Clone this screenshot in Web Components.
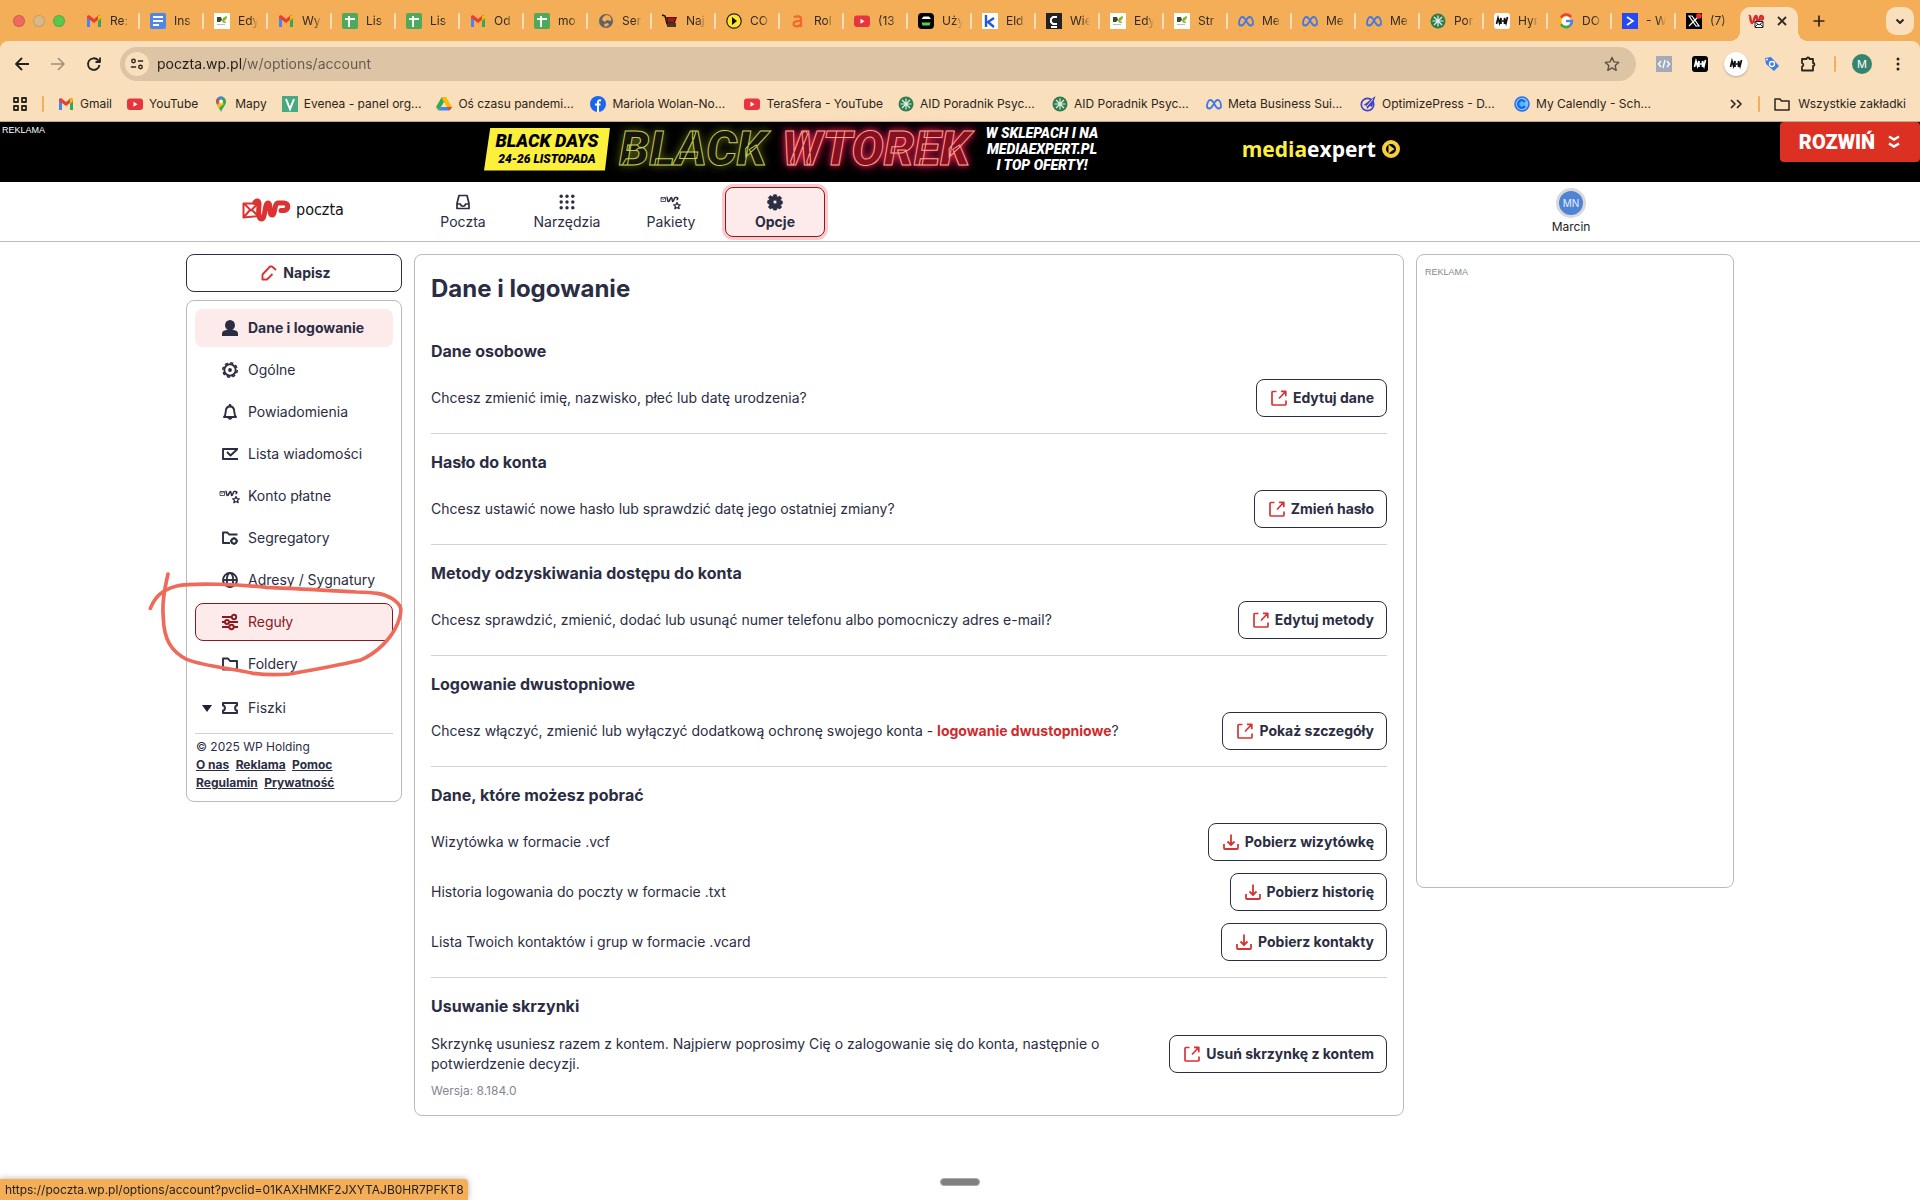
<!DOCTYPE html>
<html lang="pl">
<head>
<meta charset="utf-8">
<title>WP Poczta - Dane i logowanie</title>
<style>
  body {
    margin: 0;
    min-height: 100vh;
    display: flex;
    flex-direction: column;
    background: #fff;
    color: #2b2d42;
    font-family: Inter, "Liberation Sans", sans-serif;
    font-size: 14px;
    line-height: 20px;
  }
</style>
</head>
<body>
<browser-chrome></browser-chrome>
<ad-banner></ad-banner>
<mail-header>
  <nav-item icon="inbox">Poczta</nav-item>
  <nav-item icon="grid">Narzędzia</nav-item>
  <nav-item icon="wpstar">Pakiety</nav-item>
  <nav-item icon="gearfill" active>Opcje</nav-item>
</mail-header>
<mail-layout>
  <side-menu slot="side">
    <side-item icon="person" state="current">Dane i logowanie</side-item>
    <side-item icon="gear">Ogólne</side-item>
    <side-item icon="bell">Powiadomienia</side-item>
    <side-item icon="listcheck">Lista wiadomości</side-item>
    <side-item icon="wpstar">Konto płatne</side-item>
    <side-item icon="foldergear">Segregatory</side-item>
    <side-item icon="globe">Adresy / Sygnatury</side-item>
    <side-item icon="sliders" state="hover">Reguły</side-item>
    <side-item icon="folder">Foldery</side-item>
    <side-item icon="ticket" expandable>Fiszki</side-item>
  </side-menu>
  <options-panel heading="Dane i logowanie" version="Wersja: 8.184.0">
    <option-section heading="Dane osobowe">
      <option-row icon="open" action="Edytuj dane">Chcesz zmienić imię, nazwisko, płeć lub datę urodzenia?</option-row>
    </option-section>
    <option-section heading="Hasło do konta">
      <option-row icon="open" action="Zmień hasło">Chcesz ustawić nowe hasło lub sprawdzić datę jego ostatniej zmiany?</option-row>
    </option-section>
    <option-section heading="Metody odzyskiwania dostępu do konta">
      <option-row icon="open" action="Edytuj metody">Chcesz sprawdzić, zmienić, dodać lub usunąć numer telefonu albo pomocniczy adres e-mail?</option-row>
    </option-section>
    <option-section heading="Logowanie dwustopniowe">
      <option-row icon="open" action="Pokaż szczegóły">Chcesz włączyć, zmienić lub wyłączyć dodatkową ochronę swojego konta - <a href="#2fa">logowanie dwustopniowe</a>?</option-row>
    </option-section>
    <option-section heading="Dane, które możesz pobrać">
      <option-row icon="download" action="Pobierz wizytówkę">Wizytówka w formacie .vcf</option-row>
      <option-row icon="download" action="Pobierz historię">Historia logowania do poczty w formacie .txt</option-row>
      <option-row icon="download" action="Pobierz kontakty">Lista Twoich kontaktów i grup w formacie .vcard</option-row>
    </option-section>
    <option-section heading="Usuwanie skrzynki" last>
      <option-row icon="open" action="Usuń skrzynkę z kontem">Skrzynkę usuniesz razem z kontem. Najpierw poprosimy Cię o zalogowanie się do konta, następnie o potwierdzenie decyzji.</option-row>
    </option-section>
  </options-panel>
  <ad-box slot="ads">REKLAMA</ad-box>
</mail-layout>
<status-bar>https://poczta.wp.pl/options/account?pvclid=01KAXHMKF2JXYTAJB0HR7PFKT8</status-bar>
<drag-handle></drag-handle>

<script>
// Icon shapes, all on a 16x16 grid
const line = (d, w = 1.6) => `<path d="${d}" fill="none" stroke="currentColor" stroke-width="${w}" stroke-linejoin="round"/>`;
const gearPath = 'M6.6.8h2.8l.4 1.9 1.2.5 1.6-1.1 2 2-1.1 1.6.5 1.2 1.3.3v2.6l-1.3.4-.5 1.2 1.1 1.6-2 2-1.6-1.1-1.2.5-.4 1.6H6.6l-.4-1.6-1.2-.5-1.6 1.1-2-2 1.1-1.6L2 9.6l-1.3-.4V6.8L2 6.3l.5-1.2-1.1-1.6 2-2L5 2.9l1.2-.5z';
const mn = (bg, fg) => `<rect width="16" height="16" rx="3" fill="${bg}"/><path d="M2.500 11 4 5l1.500 5L7 5v6M8 8h2M10.500 11V5l1.500 5 1.500-6" fill="none" stroke="${fg}" stroke-width="1.700"/>`;

const ICONS = {
  gmail: '<path d="M1 3v11h3V7l4 3 4-3v7h3V3l-2-1-5 4-5-4z" fill="#e34133"/><path d="M1 5v9h3V7z" fill="#4a85ef"/><path d="M15 5v9h-3V7z" fill="#34a853"/><path d="M12 3l3-1v3l-3 3z" fill="#fbbc04"/>',
  docs: '<rect width="16" height="16" rx="2" fill="#4f86ee"/><path d="M3 4h10M3 8h10M3 12h6" stroke="#fff" stroke-width="1.800"/>',
  sheets: '<rect width="16" height="16" rx="2" fill="#4fa95c"/><path d="M3 6h10M7 3v11" stroke="#fff" stroke-width="1.800"/>',
  leaf: '<path d="M0 0h16v16H0z" fill="#fff"/><path d="M8 8c0-3 2-4 5-5 0 3-1 4-3 5 1 0 2 1 2 2-2 0-3 0-4-2z" fill="#8fb52c"/><path d="M3 4h4l1 3-2 2H3z" fill="#394b35"/><path d="M3 11.500h8" stroke="#bbb"/>',
  world: '<circle cx="8" cy="8" r="7" fill="#5f6368"/><path d="M8 2c4 0 6 3 5 6l-4-1-2 2-3-2 1-3zM6 11l4-1 1 2-4 2z" fill="#f4ae57"/>',
  cart: '<path d="M0 2l3 1 2 8h9M5 13h9" fill="none" stroke="#111" stroke-width="1.400"/><path d="M4 4h11l-2 6H5z" fill="#5b1411"/><path d="M6 6h7M6 8h6" stroke="#d23"/>',
  play: '<circle cx="8" cy="8" r="7.200" fill="#ffe52d" stroke="#222" stroke-width="1.200"/><path d="M6 4l5 4-5 4z" fill="#111"/>',
  letterA: '<path d="M4 4.500c1.500-1.500 7-2 7 1.500v8M11 8c-4-.5-7.500.5-7.500 3 0 3.500 6 3 7.500 0" fill="none" stroke="#f0682c" stroke-width="2.200"/>',
  youtube: '<rect y="2.500" width="16" height="11.500" rx="3" fill="#e93440"/><path d="M6.500 5.800v5l4-2.500z" fill="#fff"/>',
  robot: '<rect width="16" height="16" rx="4" fill="#000"/><path d="M3.500 6l2-2.500h5.500l2 2.500z" fill="#fff"/><path d="M3.500 9.500h9l-1 3h-7z" fill="#4fd35a"/>',
  letterK: '<path d="M0 0h16v16H0z" fill="#fff"/><path d="M4 2v12M12 5L6 9l6 5" fill="none" stroke="#2459d9" stroke-width="2.400"/>',
  letterC: '<path d="M0 0h16v16H0z" fill="#222"/><path d="M11 4H7L5 6v3l2 2h4M5 14h6" fill="none" stroke="#fff" stroke-width="2"/>',
  meta: '<path d="M1 10.500c0-3.500 1.500-6.500 3.500-6.500 3.500 0 4.500 8.500 8 8.500 1.700 0 2.500-1 2.500-2.500 0-3.500-1.500-6-3.500-6-3.400 0-4.500 8.500-8 8.500C1.800 12.500 1 11.800 1 10.500z" fill="none" stroke="#3f78e8" stroke-width="1.800"/>',
  asterisk: '<circle cx="8" cy="8" r="7.500" fill="#2f7d4f"/><path d="M8 2.500v11M2.500 8h11M4 4l8 8M12 4l-8 8" stroke="#dff0e2" stroke-width="1.200"/>',
  mnwhite: mn('#fff', '#111'),
  mnblack: mn('#000', '#fff'),
  google: '<path d="M13.200 4A6 6 0 0 0 3 4.800" fill="none" stroke="#ea4335" stroke-width="2.600"/><path d="M3 4.800a6 6 0 0 0 0 6.400" fill="none" stroke="#fbbc04" stroke-width="2.600"/><path d="M3 11.200a6 6 0 0 0 8.800 1.600" fill="none" stroke="#34a853" stroke-width="2.600"/><path d="M8 8h6c0 2-.8 3.700-2.200 4.800" fill="none" stroke="#4285f4" stroke-width="2.600"/><circle cx="8" cy="8" r="4.500" fill="#fff"/><path d="M8 8h5" stroke="#4285f4" stroke-width="2.400"/>',
  arrowblue: '<path d="M0 0h16v16H0z" fill="#2449f5"/><path d="M5 4l6 4-6 4" fill="none" stroke="#fff" stroke-width="1.600"/>',
  xlogo: '<path d="M0 0h16v16H0z" fill="#000"/><path d="M3 3h3l7 10h-3zM13 3L3 13" fill="none" stroke="#fff" stroke-width="1.200"/><circle cx="13" cy="3" r="2.800" fill="#ef2d2d"/>',
  wpfav: '<path d="M1 3c2-1 1 7 3 7s2-7 4-7 0 7 2 7 1-7 3-7 3 3 0 4" fill="none" stroke="#d9292c" stroke-width="2.400"/><path d="M7 8.500h8v6H7z" fill="#fff" stroke="#222"/><path d="M7 9l4 3 4-3M7 14l3-3M15 14l-3-3" fill="none" stroke="#222"/>',
  maps: '<path d="M8 16C6 11 3 9 3 5.500a5 5 0 0 1 10 0C13 9 10 11 8 16z" fill="#34a853"/><path d="M3 6a5 5 0 0 1 7-5L5 8z" fill="#4285f4"/><path d="M5 8L3 5l2-3 3 3z" fill="#ea4335"/><path d="M4 9l4-4 3 3-5 4z" fill="#fbbc04"/><circle cx="8" cy="5.500" r="1.900" fill="#fff"/>',
  evenea: '<path d="M0 0h16v16H0z" fill="#47a981"/><path d="M4 3l4 10 4-10" fill="none" stroke="#fff" stroke-width="2"/>',
  drive: '<path d="M5.500 1.500h5L5 11l-2.500 3.500L0 11z" fill="#34a853"/><path d="M10.500 1.500L16 11h-5.200L5.500 1.500z" fill="#fbbc04"/><path d="M5 11h11l-2.500 3.500h-11z" fill="#4285f4"/><path d="M11 11h5l-2.500 3.500z" fill="#ea4335"/>',
  facebook: '<circle cx="8" cy="8" r="8" fill="#1b66f0"/><path d="M11 4.500c-2.500-.5-3 .5-3 2V16M5 8.500h5.500" fill="none" stroke="#fff" stroke-width="2"/>',
  optimize: '<circle cx="7.500" cy="8.500" r="6.200" fill="none" stroke="#3e46c8" stroke-width="1.700"/><path d="M15.500 0L3.500 9l3 .8L7 13l3-3 2 1z" fill="#3e46c8"/><path d="M13 3l-6 7" stroke="#fadfbc"/>',
  calendly: '<circle cx="8" cy="8" r="7" fill="#7cc4ff" stroke="#2f6fe4" stroke-width="1.600"/><path d="M11 5.800a3.800 3.800 0 1 0 0 4.400" fill="#55b6ff" stroke="#1464ec" stroke-width="2.200"/>',
  code: '<path d="M0 0h16v16H0z" fill="#a5aabb"/><path d="M5 5L2.500 8 5 11M11 5l2.500 3-2.500 3M9 4l-2 8" fill="none" stroke="#fff" stroke-width="1.300"/>',
  tag: '<path d="M1 2l6-1 8 9-5 5-8-7z" fill="#3f7be8"/><circle cx="8" cy="8" r="2.500" fill="none" stroke="#fff" stroke-width="1.300"/><circle cx="3" cy="3.500" r="1" fill="#fff"/>',
  puzzle: line('M2 3h4.500a1.500 1.500 0 0 1 3 0H13v4a1.500 1.500 0 0 1 0 3v4.500H2V10.500a1.800 1.800 0 0 0 0-3.500z', 1.800),
  back: line('M15 8H2M8 2L2 8l6 6', 1.800),
  forward: line('M1 8h13M8 2l6 6-6 6', 1.600),
  reload: line('M13.500 9a5.800 5.800 0 1 1-1.400-4.800L14 6M14 1.500V6H9.500', 1.800),
  tune: line('M9 4.500h6M1 11.500h6', 1.800) + '<circle cx="4" cy="4.500" r="2" fill="none" stroke="currentColor" stroke-width="1.600"/><circle cx="12" cy="11.500" r="2" fill="none" stroke="currentColor" stroke-width="1.600"/>',
  star: line('M8 1.500l2 4.400 4.700.5-3.500 3.200 1 4.700L8 11.900l-4.200 2.400 1-4.700L1.300 6.400 6 5.900z', 1.400),
  apps: line('M2 2h4v4H2zM10 2h4v4h-4zM2 10h4v4H2zM10 10h4v4h-4z', 1.800),
  more: '<circle cx="8" cy="3" r="1.500"/><circle cx="8" cy="8" r="1.500"/><circle cx="8" cy="13" r="1.500"/>',
  close: line('M4 4l8 8M12 4l-8 8', 1.800),
  plus: line('M8 2.500v11M2.500 8h11', 1.700),
  chevron: line('M4.500 6.500L8 10l3.500-3.500', 2),
  raquo: line('M3 4l4 4-4 4M9 4l4 4-4 4', 1.700),
  bookfolder: line('M1 3h5l1.500 2H15v9H1z', 1.500),
  inbox: line('M4 1.500h8l2 8v5H2v-5zM2 10h3.500c.3 3 4.700 3 5 0H14', 1.700),
  grid: [2.2, 8, 13.8].map(y => [2.2, 8, 13.8].map(x => `<circle cx="${x}" cy="${y}" r="1.700"/>`).join('')).join(''),
  wpstar: line('M-2 3.500h4.500v4h-4.500zM-2 3.500l2.200 2 2.200-2', 0.8) + line('M3.500 3.500c1.200-.8.600 4 2 4S7.200 3.500 8.400 3.500s.3 4 1.500 4 .9-4 2.300-4h1.300c1.900 0 1.500 2.200 0 2.200', 1.600) + line('M14 8.500l1 2.100 2.300.2-1.700 1.600.5 2.300L14 13.500l-2.100 1.200.5-2.300-1.700-1.600 2.300-.2z', 1.300),
  gearfill: `<path fill-rule="evenodd" d="${gearPath}M8 6a2 2 0 1 0 0 4 2 2 0 0 0 0-4z" stroke="currentColor" stroke-width=".8" stroke-linejoin="round"/>`,
  gear: '<g fill="none" stroke="currentColor"><circle cx="8" cy="8" r="5.700" stroke-width="1.900"/><circle cx="8" cy="8" r="7.200" stroke-width="1.600" stroke-dasharray="3.200 2.450"/></g><circle cx="8" cy="8" r="1.900"/>',
  person: '<ellipse cx="8" cy="5.200" rx="5" ry="5.200"/><path d="M0 16v-2.500C0 11 3 10 5 10h6c2 0 5 1 5 3.500V16z"/>',
  bell: line('M2 13c1.500-1.500 1.500-3 1.800-6C4 4 5.500 2.500 8 2.500S12 4 12.200 7c.3 3 .3 4.500 1.800 6z', 1.900) + '<circle cx="8" cy="1.500" r="1.400"/><path d="M5.500 13h5c0 3.500-5 3.500-5 0z"/>',
  listcheck: line('M16 13H1V3h15M5 6l3.500 3.500L15 3.500', 1.900),
  foldergear: line('M8 13H1V2.500h4.500L7 4.500h8.500', 1.900) + '<circle cx="12" cy="11" r="2.600" fill="none" stroke="currentColor" stroke-width="2"/><path d="M12 7v2M12 13v2M8 11h2M14 11h2" stroke="currentColor" stroke-width="1.400"/>',
  globe: '<g fill="none" stroke="currentColor" stroke-width="1.900"><circle cx="8" cy="8" r="7"/><ellipse cx="8" cy="8" rx="3.200" ry="7"/><path d="M1 8h14"/></g>',
  sliders: line('M0 3h9M0 8h3M7 8h9M0 13h7M12 13h4', 1.900) + '<g fill="none" stroke="currentColor" stroke-width="1.900"><circle cx="12" cy="3" r="2.200"/><circle cx="5" cy="8" r="2"/><circle cx="9.500" cy="13" r="2.200"/></g>',
  folder: line('M1 13.500v-11h5l2 2.500h7v8.500z', 1.900),
  ticket: line('M1 3h14v2.500c-2.500 0-2.500 5 0 5V13H1v-2.500c2.500 0 2.500-5 0-5z', 2),
  open: line('M5.500 1.500H2A1 1 0 0 0 1 2.500V14a1 1 0 0 0 1 1h12a1 1 0 0 0 1-1v-3.500M8 8.500L14.500 1.500M10 1.300h4.800v5', 1.700),
  download: line('M8 0.500v10M4.500 7.500L8 11l3.500-3.500M1 10v4a1 1 0 0 0 1 1h12a1 1 0 0 0 1-1v-4', 1.800),
  pen: line('M15 5l-4-3.500H9L1.500 9.500v5H6l5.500-5.500', 1.900)
};

class AppIcon extends HTMLElement {
  connectedCallback() {
    const root = this.attachShadow({ mode: 'open' });
    root.innerHTML = `
      <style>
        :host { display: inline-flex; flex: none; width: 16px; height: 16px; }
        svg { width: 100%; height: 100%; fill: currentColor; overflow: visible; }
      </style>
      <svg viewBox="0 0 16 16" aria-hidden="true">${ICONS[this.getAttribute('name')] || ''}</svg>`;
  }
}

// One squeezed browser tab
class BrowserTab extends HTMLElement {
  connectedCallback() {
    const active = this.hasAttribute('active');
    this.attachShadow({ mode: 'open' }).innerHTML = `
      <style>
        :host { display: block; flex: 0 1 64px; min-width: 0; height: 34px; }
        :host([active]) { flex: 0 0 58px; }
        button {
          display: flex; align-items: center; gap: 8px; position: relative;
          box-sizing: border-box; width: 100%; height: 28px; padding: 0 10px;
          border: 0; background: none; color: #2f2a24; font: 12px/16px Inter, sans-serif;
        }
        span { flex: 1; overflow: hidden; white-space: nowrap; text-align: left;
          -webkit-mask-image: linear-gradient(90deg, #000 60%, transparent); mask-image: linear-gradient(90deg, #000 60%, transparent); }
        :host(:not([active]):not([last])) button::after {
          content: ""; position: absolute; right: 0; width: 2px; height: 16px; background: #fadfbc; border-radius: 1px;
        }
        :host([active]) button { height: 34px; padding: 0 8px 6px; gap: 10px; border-radius: 10px 10px 0 0; background: #fadfbc; }
        :host([active]) button::before, :host([active]) button::after {
          content: ""; position: absolute; bottom: 0; width: 10px; height: 10px;
        }
        :host([active]) button::before { right: 100%; background: radial-gradient(circle at 0 0, transparent 10px, #fadfbc 10px); }
        :host([active]) button::after { left: 100%; background: radial-gradient(circle at 100% 0, transparent 10px, #fadfbc 10px); }
      </style>
      <button role="tab" aria-selected="${active}">
        <app-icon name="${this.getAttribute('icon')}"></app-icon>
        ${active ? '<app-icon name="close"></app-icon>' : '<span><slot></slot></span>'}
      </button>`;
  }
}

const TABS = [
  ['gmail', 'Re:'], ['docs', 'Ins'], ['leaf', 'Edy'], ['gmail', 'Wy'], ['sheets', 'Lis'], ['sheets', 'Lis'],
  ['gmail', 'Od'], ['sheets', 'mo'], ['world', 'Ser'], ['cart', 'Naj'], ['play', 'CO'], ['letterA', 'Rol'],
  ['youtube', '(13'], ['robot', 'Uży'], ['letterK', 'Eld'], ['letterC', 'Wie'], ['leaf', 'Edy'], ['leaf', 'Str'],
  ['meta', 'Me'], ['meta', 'Me'], ['meta', 'Me'], ['asterisk', 'Por'], ['mnwhite', 'Hyr'], ['google', 'DO'],
  ['arrowblue', '- W'], ['xlogo', '(7)']
];

const BOOKMARKS = [
  ['gmail', 'Gmail'], ['youtube', 'YouTube'], ['maps', 'Mapy'], ['evenea', 'Evenea - panel org...'],
  ['drive', 'Oś czasu pandemi...'], ['facebook', 'Mariola Wolan-No...'], ['youtube', 'TeraSfera - YouTube'],
  ['asterisk', 'AID Poradnik Psyc...'], ['asterisk', 'AID Poradnik Psyc...'], ['meta', 'Meta Business Sui...'],
  ['optimize', 'OptimizePress - D...'], ['calendly', 'My Calendly - Sch...']
];

class BrowserChrome extends HTMLElement {
  connectedCallback() {
    const tabs = TABS.map(([icon, text], i) =>
      `<browser-tab icon="${icon}" ${i === TABS.length - 1 ? 'last' : ''}>${text}</browser-tab>`).join('');
    const marks = BOOKMARKS.map(([icon, text]) =>
      `<a href="#" class="${text.endsWith('...') ? 'long' : ''}"><app-icon name="${icon}"></app-icon>${text}</a>`).join('');
    this.attachShadow({ mode: 'open' }).innerHTML = `
      <style>
        :host { display: block; background: #f4ae57; color: #2b2620; border-bottom: 1px solid #bfa98c; }
        button { display: flex; align-items: center; justify-content: center; padding: 0; border: 0; background: none; color: inherit; }
        .strip { display: flex; height: 34px; padding: 7px 6px 0 0; }
        .lights { display: flex; flex: none; gap: 8px; width: 63px; padding: 8px 0 0 13px; }
        .lights i { width: 12px; height: 12px; border-radius: 50%; box-sizing: border-box; border: 1px solid #0002; }
        .plus { width: 42px; height: 28px; }
        .drop { width: 28px; height: 28px; margin-left: auto; border-radius: 10px; background: #fadfbc; }
        .body { background: #fadfbc; border-radius: 8px 8px 0 0; padding-top: 6px; }
        .bar { display: flex; align-items: center; padding: 0 14px; gap: 20px; height: 34px; }
        .nav { color: #222; }
        .dim { color: #a38f76; }
        .url { display: flex; flex: 1; align-items: center; gap: 8px; height: 34px; margin-left: -2px;
          padding: 0 16px 0 5px; border-radius: 17px; background: #dcc4a5; box-sizing: border-box; }
        .info { width: 24px; height: 24px; border-radius: 50%; background: #fadfbc; flex: none; }
        .info app-icon { width: 14px; height: 14px; }
        input { flex: 1; min-width: 0; border: 0; padding: 0; outline: 0; font: 14px/20px Inter, sans-serif;
          background: linear-gradient(90deg, #1f1d1b 85px, #625a50 85px); -webkit-background-clip: text; background-clip: text;
          -webkit-text-fill-color: transparent; }
        .ext { display: flex; align-items: center; gap: 20px; }
        .round { width: 24px; height: 24px; margin: 0 -4px; border-radius: 50%; background: #fff; box-shadow: 0 1px 2px #0004; }
        .sep { width: 2px; height: 16px; background: #f4ae57; border-radius: 1px; flex: none; }
        .ext .sep { margin: 0 -4px 0 -2px; }
        .me { width: 20px; height: 20px; margin-right: -2px; border-radius: 50%; background: #35846f; color: #fff; font: 11px/20px Inter, sans-serif; }
        .marks { display: flex; align-items: center; height: 35px; padding: 5px 14px 0 12px; font-size: 12px; line-height: 16px; white-space: nowrap; }
        .marks a { display: flex; align-items: center; gap: 6px; margin-right: 15px; color: inherit; text-decoration: none; flex: none; }
        .marks a.long { min-width: 139px; }
        .marks .sep { margin: 0 14px; }
        .marks .tail { display: flex; align-items: center; margin-left: auto; }
        .marks .tail a { margin: 0; gap: 8px; }
      </style>
      <div class="strip" role="tablist">
        <div class="lights"><i style="background:#ee6a5f"></i><i style="background:#d9b888"></i><i style="background:#5ac74f"></i></div>
        ${tabs}<browser-tab icon="wpfav" active></browser-tab>
        <button class="plus" aria-label="Nowa karta"><app-icon name="plus"></app-icon></button>
        <button class="drop" aria-label="Wyszukaj karty"><app-icon name="chevron"></app-icon></button>
      </div>
      <div class="body">
        <div class="bar">
          <button class="nav" aria-label="Wstecz"><app-icon name="back"></app-icon></button>
          <button class="dim" aria-label="Dalej"><app-icon name="forward"></app-icon></button>
          <button class="nav" aria-label="Odśwież"><app-icon name="reload"></app-icon></button>
          <div class="url">
            <button class="info" aria-label="Informacje o stronie"><app-icon name="tune"></app-icon></button>
            <input type="text" aria-label="Adres" value="poczta.wp.pl/w/options/account">
            <button aria-label="Dodaj zakładkę" style="color:#5c5247"><app-icon name="star"></app-icon></button>
          </div>
          <div class="ext">
            <app-icon name="code"></app-icon>
            <app-icon name="mnblack"></app-icon>
            <button class="round" aria-label="Rozszerzenie"><app-icon name="mnwhite"></app-icon></button>
            <app-icon name="tag"></app-icon>
            <button aria-label="Rozszerzenia"><app-icon name="puzzle"></app-icon></button>
            <span class="sep"></span>
            <button class="me">M</button>
            <button aria-label="Menu"><app-icon name="more"></app-icon></button>
          </div>
        </div>
        <div class="marks">
          <button aria-label="Aplikacje"><app-icon name="apps"></app-icon></button>
          <span class="sep"></span>
          ${marks}
          <div class="tail">
            <button aria-label="Więcej zakładek"><app-icon name="raquo"></app-icon></button>
            <span class="sep"></span>
            <a href="#"><app-icon name="bookfolder"></app-icon>Wszystkie zakładki</a>
          </div>
        </div>
      </div>`;
  }
}

class AdBanner extends HTMLElement {
  connectedCallback() {
    this.attachShadow({ mode: 'open' }).innerHTML = `
      <style>
        :host { display: flex; justify-content: center; position: relative; height: 60px; background: #000; color: #fff;
          --cond: Roboto, "Liberation Sans", sans-serif; }
        small { position: absolute; left: 2px; top: 2px; font: 9px/12px "Liberation Sans", sans-serif; }
        .creative { display: flex; align-items: center; width: 952px; box-sizing: border-box; padding-bottom: 6px; }
        .date { width: 126px; height: 43px; background: #fdf03c; clip-path: polygon(5% 0, 100% 0, 96% 100%, 0 100%); color: #000;
          display: flex; flex-direction: column; align-items: center; justify-content: center; flex: none; }
        .date b { font: italic 900 18px/20px var(--cond); white-space: nowrap; }
        .date b + b { font-size: 12px; line-height: 16px; }
        .neon { font: italic 900 48px/48px var(--cond); flex: none; text-align: center; }
        .black { width: 166px; color: #16170a; -webkit-text-stroke: 1px #c3cb58; text-shadow: 0 0 10px #5c6318; }
        .wtorek { width: 200px; color: #86101f; -webkit-text-stroke: 1px #ffa195; text-shadow: 0 0 6px #f0263e, 0 0 12px #a30f4c; }
        .shops { width: 132px; font: italic 900 14px/16px var(--cond); text-align: center; white-space: nowrap; flex: none; }
        .brand { display: flex; align-items: center; gap: 6px; margin-left: auto; padding-right: 36px; font: 700 21px/30px "Open Sans", sans-serif; }
        .brand em { font-style: normal; color: #fdf03c; }
        .brand div { white-space: nowrap; }
        .brand svg { width: 18px; height: 18px; }
        button { position: absolute; right: 0; top: 0; width: 140px; height: 40px; display: flex; align-items: center; justify-content: center; gap: 12px;
          border: 0; border-radius: 4px; background: #dc3022; color: #fff; font: 900 20px/28px var(--cond); }
      </style>
      <small>REKLAMA</small>
      <div class="creative">
        <div class="date"><b>BLACK DAYS</b><b>24-26 LISTOPADA</b></div>
        <div class="neon black">BLACK</div>
        <div class="neon wtorek">WTOREK</div>
        <div class="shops">W SKLEPACH I NA<br>MEDIAEXPERT.PL<br>I TOP OFERTY!</div>
        <div class="brand"><div><em>media</em>expert</div>
          <svg viewBox="0 0 18 18"><circle cx="9" cy="9" r="7" fill="#000" stroke="#f6cf3c" stroke-width="4"/><path d="M6.500 4.500l6 4.500-6 4.500z" fill="#f6cf3c"/></svg>
        </div>
      </div>
      <button>ROZWIŃ <svg width="14" height="14" viewBox="0 0 14 14" fill="none" stroke="#fff" stroke-width="2.500"><path d="M2 1.500l5 3 5-3M2 8.500l5 3 5-3"/></svg></button>`;
  }
}

class NavItem extends HTMLElement {
  connectedCallback() {
    this.attachShadow({ mode: 'open' }).innerHTML = `
      <style>
        :host { display: block; width: 100px; }
        a { display: flex; flex-direction: column; align-items: center; gap: 2px; box-sizing: border-box; height: 50px; padding-top: 6px;
          border: 1px solid transparent; border-radius: 8px; color: #2b2d42; text-decoration: none; }
        :host([active]) a { background: #fdebeb; border-color: #8b1a1f; box-shadow: 0 0 0 3px #f9c9cb; font-weight: 700; }
      </style>
      <a href="#"><app-icon name="${this.getAttribute('icon')}"></app-icon><slot></slot></a>`;
  }
}

class MailHeader extends HTMLElement {
  connectedCallback() {
    this.attachShadow({ mode: 'open' }).innerHTML = `
      <style>
        :host { display: block; border-bottom: 1px solid #b9b9be; }
        .inner { display: flex; max-width: 1548px; height: 59px; margin: 0 auto; }
        .logo { display: flex; align-items: center; gap: 5px; width: 115px; padding: 0 0 4px 56px; color: #111; text-decoration: none;
          font: 16px/24px "DejaVu Sans Condensed", "Noto Sans", sans-serif; }
        .logo svg { flex: none; }
        nav { display: flex; gap: 4px; padding: 5px 0 0 56px; }
        .user { display: flex; flex-direction: column; align-items: center; gap: 1px; margin-left: auto; width: 100px; padding: 6px 0 0; margin-right: 113px;
          border: 0; background: none; color: #222; font: 12px/16px Inter, sans-serif; }
        .user i { width: 24px; height: 24px; border: 3px solid #d9d9db; border-radius: 50%; background: #4f84d4; color: #e8eefa; font: 10px/24px Inter, sans-serif; }
      </style>
      <div class="inner">
        <a class="logo" href="#">
          <svg width="49" height="24" viewBox="0 0 49 24" fill="none" stroke="#dc3232" stroke-linejoin="round" stroke-linecap="round">
            <path d="M1.500 5.500H14M1.500 5.500v14l15-1.500M2 5.500l7 7 6-6M2 19l6-7M15 17l-5-5" stroke-width="2"/>
            <path d="M13 4.500c3-3.500 4.500-.5 4 3-.5 5.500-1 13.500 2.500 13.500 4 0 3-16 6.500-16 3.500 0 .5 12 4 12s2-12 6-12h6c5 0 5 6.500 0 7.500h-3" stroke-width="5"/>
          </svg>poczta</a>
        <nav><slot></slot></nav>
        <button class="user"><i>MN</i>Marcin</button>
      </div>`;
  }
}

class MailLayout extends HTMLElement {
  connectedCallback() {
    this.attachShadow({ mode: 'open' }).innerHTML = `
      <style>
        :host { display: block; }
        .cols { display: flex; align-items: flex-start; gap: 12px; max-width: 1548px; margin: 12px auto 0; }
        ::slotted([slot=side]) { flex: 0 0 216px; }
        ::slotted([slot=ads]) { flex: 0 0 318px; }
        main { flex: 1; min-width: 0; }
      </style>
      <div class="cols">
        <slot name="side"></slot>
        <main><slot></slot></main>
        <slot name="ads"></slot>
      </div>`;
  }
}

class SideItem extends HTMLElement {
  connectedCallback() {
    this.attachShadow({ mode: 'open' }).innerHTML = `
      <style>
        :host { display: block; margin-bottom: 4px; }
        :host([expandable]) { margin: 6px 0; }
        a { display: flex; align-items: center; gap: 10px; position: relative; box-sizing: border-box; height: 38px; padding-left: 26px;
          border: 1px solid transparent; border-radius: 8px; color: #2b2d42; text-decoration: none; white-space: nowrap; }
        :host([state=current]) a { background: #fdebeb; font-weight: 700; }
        :host([state=hover]) a { background: #fdebeb; border-color: #8b1a1f; color: #8b1a1f; }
        :host([expandable]) a::before { content: ""; position: absolute; left: 6px; border: 5px solid transparent; border-top: 7px solid #1f2136; border-bottom: 0; }
      </style>
      <a href="#"><app-icon name="${this.getAttribute('icon')}"></app-icon><span><slot></slot></span></a>`;
  }
}

class SideMenu extends HTMLElement {
  connectedCallback() {
    this.attachShadow({ mode: 'open' }).innerHTML = `
      <style>
        :host { display: block; position: relative; }
        .write { display: flex; align-items: center; justify-content: center; gap: 6px; width: 100%; height: 38px; padding: 0 6px 0 10px; border: 1px solid #2b2d42;
          border-radius: 8px; background: #fff; color: #2b2d42; font: 700 14px/20px Inter, sans-serif; }
        .write app-icon { color: #d63434; }
        .panel { margin-top: 8px; padding: 8px 8px 9px; border: 1px solid #b9b9be; border-radius: 8px; }
        footer { border-top: 1px solid #cfcfd4; padding: 4px 0 0 1px; font-size: 12px; line-height: 18px; }
        footer a { color: #2b2d42; font-weight: 700; margin-right: 3px; }
        /* hand-drawn loop around the "Reguły" item */
        .mark { position: absolute; left: -46px; top: 296px; width: 300px; height: 150px; pointer-events: none; }
      </style>
      <button class="write"><app-icon name="pen"></app-icon>Napisz</button>
      <div class="panel">
        <nav><slot></slot></nav>
        <footer>© 2025 WP Holding<br>
          <a href="#">O nas</a> <a href="#">Reklama</a> <a href="#">Pomoc</a><br>
          <a href="#">Regulamin</a> <a href="#">Prywatność</a></footer>
      </div>
      <svg class="mark" viewBox="0 0 900 450" fill="none" stroke="#ee6b5b" stroke-width="11" stroke-linecap="round">
        <path d="M84 72C72 125 66 160 70 205C72 270 95 305 140 328C190 348 270 355 340 370Q390 377 450 372C520 360 600 345 660 331C710 310 755 265 773 220C790 175 785 165 755 145C730 130 700 127 650 126C560 122 470 115 380 112C300 104 160 97 110 108C65 120 45 140 31 175"/>
      </svg>`;
  }
}

class OptionsPanel extends HTMLElement {
  connectedCallback() {
    this.attachShadow({ mode: 'open' }).innerHTML = `
      <style>
        :host { display: block; padding: 18px 16px 16px; border: 1px solid #b9b9be; border-radius: 8px; }
        h1 { margin: 0 0 18px; font-size: 24px; line-height: 32px; }
        p { margin: 9px 0 0; color: #85868f; font-size: 12px; line-height: 16px; }
      </style>
      <h1>${this.getAttribute('heading')}</h1>
      <slot></slot>
      <p>${this.getAttribute('version')}</p>`;
  }
}

class OptionSection extends HTMLElement {
  connectedCallback() {
    this.attachShadow({ mode: 'open' }).innerHTML = `
      <style>
        :host { display: block; padding: 16px 0; border-bottom: 1px solid #d3d4da; }
        :host([last]) { padding-bottom: 0; border-bottom: 0; }
        h2 { margin: 0 0 16px; font-size: 16px; line-height: 24px; }
        .rows { display: flex; flex-direction: column; gap: 12px; }
      </style>
      <h2>${this.getAttribute('heading')}</h2>
      <div class="rows"><slot></slot></div>`;
  }
}

class OptionRow extends HTMLElement {
  connectedCallback() {
    this.attachShadow({ mode: 'open' }).innerHTML = `
      <style>
        :host { display: flex; align-items: center; justify-content: space-between; gap: 16px; }
        ::slotted(a) { color: #cf2a2d; font-weight: 700; text-decoration: none; }
        button { display: flex; align-items: center; gap: 6px; flex: none; height: 38px; padding: 0 12px 0 14px; border: 1px solid #2b2d42;
          border-radius: 8px; background: #fff; color: #2b2d42; font: 700 14px/20px Inter, sans-serif; }
        app-icon { color: #d63434; }
      </style>
      <div><slot></slot></div>
      <button><app-icon name="${this.getAttribute('icon')}"></app-icon>${this.getAttribute('action')}</button>`;
  }
}

class AdBox extends HTMLElement {
  connectedCallback() {
    this.attachShadow({ mode: 'open' }).innerHTML = `
      <style>
        :host { display: block; box-sizing: border-box; min-height: 634px; padding: 11px 8px; border: 1px solid #b9b9be; border-radius: 8px;
          color: #85868f; font: 9px/12px "Liberation Sans", sans-serif; }
      </style>
      <slot></slot>`;
  }
}

class StatusBar extends HTMLElement {
  connectedCallback() {
    this.attachShadow({ mode: 'open' }).innerHTML = `
      <style>
        :host { position: fixed; left: 0; bottom: 0; padding: 3px 4px 2px 5px; border-radius: 0 4px 0 0; background: #f4ae57; color: #222;
          font-size: 12px; line-height: 16px; box-shadow: 0 0 6px #0005; }
      </style>
      <slot></slot>`;
  }
}

class DragHandle extends HTMLElement {
  connectedCallback() {
    this.attachShadow({ mode: 'open' }).innerHTML = `
      <style>
        :host { display: block; width: 38px; height: 6px; margin: auto auto 14px; border: 1px solid #aaa; border-radius: 4px; background: #808080; }
      </style>`;
  }
}

customElements.define('app-icon', AppIcon);
customElements.define('browser-tab', BrowserTab);
customElements.define('browser-chrome', BrowserChrome);
customElements.define('ad-banner', AdBanner);
customElements.define('nav-item', NavItem);
customElements.define('mail-header', MailHeader);
customElements.define('mail-layout', MailLayout);
customElements.define('side-item', SideItem);
customElements.define('side-menu', SideMenu);
customElements.define('options-panel', OptionsPanel);
customElements.define('option-section', OptionSection);
customElements.define('option-row', OptionRow);
customElements.define('ad-box', AdBox);
customElements.define('status-bar', StatusBar);
customElements.define('drag-handle', DragHandle);
</script>
</body>
</html>
